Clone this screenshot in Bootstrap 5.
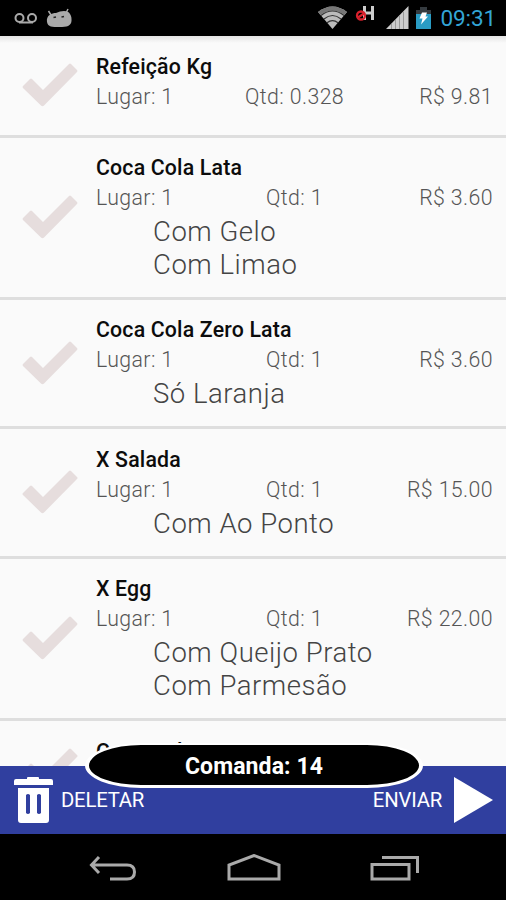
<!DOCTYPE html>
<html lang="pt-BR">
<head>
<meta charset="utf-8">
<meta name="viewport" content="width=device-width, initial-scale=1">
<title>Comanda 14</title>
<link rel="stylesheet" href="https://cdn.jsdelivr.net/npm/bootstrap@5.3.0/dist/css/bootstrap.min.css">
<style>
html,body{height:100%}
body{font-family:Roboto,"Liberation Sans",sans-serif;background:#000;font-size:21px}
.screen{width:506px;height:900px}
.status{height:36px;padding:0 10px 0 14px}
.clock{color:#33a5d6;font-size:22.5px;line-height:38px;letter-spacing:-.1px}
.orders{background:linear-gradient(#e4e4e4,#fafafa 7px);height:730px}
.order{height:129.5px;border-bottom:3px solid #dedede;padding:0 13px 0 22px}
.order.plain{height:101.5px}
.order.tall{height:162px}
.tick{width:56px;height:44px;margin-right:18px;fill:#e6dddd}
.info{padding-top:15.5px}
.name{font-weight:500;color:#0c0c0c;font-size:21.3px;line-height:30px;letter-spacing:.18px}
.meta{font-weight:300;color:#555;font-size:21.3px;line-height:30px;letter-spacing:.4px}
.meta .place{width:130px}
.meta .qty{width:135px}
.extra{font-weight:300;color:#444;font-size:27.5px;line-height:33px;letter-spacing:.53px;padding-left:57px;padding-top:2px}
.actions{height:68px;background:#303f9f;color:#fff;font-size:20.3px;letter-spacing:-.2px;padding:0 13px 0 14px}
.ticket{left:85px;top:-23px;width:338px;height:45px;background:#000;border:solid #fff;border-width:2px 4px 3px;border-radius:56px/50%;font-size:23px;line-height:44px;letter-spacing:.1px}
.keys{height:66px;padding:3px 86px 0 89px}
.keys svg{stroke:#aaa;stroke-width:3;fill:none}
</style>
<script src="https://cdn.jsdelivr.net/npm/bootstrap@5.3.0/dist/js/bootstrap.bundle.min.js"></script>
</head>
<body class="overflow-hidden">
<svg class="d-none"><symbol id="tick" viewBox="0 0 56 44"><path d="M1 23 L8 16 Q9 15 10 16 L21 27 L47 1 Q48 0 49 1 L55 7 Q56 8 55 9 L22 42.500 Q20.500 44 19 42.500 L1 25 Q0 24 1 23Z"/></symbol></svg>
<div class="screen d-flex flex-column">
  <header class="status d-flex align-items-center">
    <svg width="60" height="36" viewBox="14 0 60 36"><g fill="none" stroke="#aaa" stroke-width="2"><circle cx="19.500" cy="18" r="4"/><circle cx="32" cy="18" r="4"/><path d="M19 22.500H33"/></g>
      <g fill="#aaa"><path d="M47 22C46 15 52 13 56 13Q60 11 64 11C70 11 72 16 71.500 21C71 26 67 27 59.500 27S48 27 47 22Z"/><path d="M51 15l-2.500-4M66 13l2-4" stroke="#aaa" stroke-width="1.500"/></g><path d="M53.500 17.500l2.500-.5M61.500 17l2.500-.5" stroke="#222" stroke-width="1.500"/></svg>
    <svg class="ms-auto" width="122" height="36" viewBox="318 0 122 36">
      <path d="M318 12Q332.500 1 347 12L332.500 29Z" fill="#bbb"/><path d="M318 12Q332.500 1 347 12L344.500 15Q332.500 6 320.500 15Z" fill="#777"/><g fill="none" stroke="#333" stroke-width="1.200"><path d="M321 15.500Q332.500 6.500 344 15.500M324 19Q332.500 12 341 19M327 22.800Q332.500 18.500 338 22.800"/></g>
      <path d="M364.500 6v14M372.500 6v14M364 13h9" stroke="#ccc" stroke-width="3"/><g fill="none" stroke="#d8202c" stroke-width="2.300"><circle cx="361" cy="15.500" r="4"/><path d="M358 17.500l6-4"/></g>
      <path d="M386 29L408.500 6V29Z" fill="#ccc"/><path d="M391.500 24v5M395.500 20v9M399.500 16v13M403.500 12v17" stroke="#999"/>
      <path d="M416 10h4V7h7v3h4v4h-15z" fill="#353b40"/><path d="M416 14h15v15h-15z" fill="#2a9cc4"/><path d="M422 12.500h5l-1.500 4h2.500l-7 8 1.500-6h-3z" fill="#fff"/>
    </svg>
    <span class="clock">09:31</span>
  </header>

  <main class="orders overflow-hidden">
    <div class="order plain d-flex"><svg class="tick align-self-center flex-shrink-0"><use href="#tick"/></svg>
      <div class="info flex-grow-1"><div class="name">Refeição Kg</div><div class="meta d-flex justify-content-between"><span class="place">Lugar: 1</span><span class="qty text-center">Qtd: 0.328</span><span class="place text-end">R$ 9.81</span></div></div></div>
    <div class="order tall d-flex"><svg class="tick align-self-center flex-shrink-0"><use href="#tick"/></svg>
      <div class="info flex-grow-1"><div class="name">Coca Cola Lata</div><div class="meta d-flex justify-content-between"><span class="place">Lugar: 1</span><span class="qty text-center">Qtd: 1</span><span class="place text-end">R$ 3.60</span></div><div class="extra">Com Gelo<br>Com Limao</div></div></div>
    <div class="order d-flex"><svg class="tick align-self-center flex-shrink-0"><use href="#tick"/></svg>
      <div class="info flex-grow-1"><div class="name">Coca Cola Zero Lata</div><div class="meta d-flex justify-content-between"><span class="place">Lugar: 1</span><span class="qty text-center">Qtd: 1</span><span class="place text-end">R$ 3.60</span></div><div class="extra">Só Laranja</div></div></div>
    <div class="order d-flex"><svg class="tick align-self-center flex-shrink-0"><use href="#tick"/></svg>
      <div class="info flex-grow-1"><div class="name">X Salada</div><div class="meta d-flex justify-content-between"><span class="place">Lugar: 1</span><span class="qty text-center">Qtd: 1</span><span class="place text-end">R$ 15.00</span></div><div class="extra">Com Ao Ponto</div></div></div>
    <div class="order tall d-flex"><svg class="tick align-self-center flex-shrink-0"><use href="#tick"/></svg>
      <div class="info flex-grow-1"><div class="name">X Egg</div><div class="meta d-flex justify-content-between"><span class="place">Lugar: 1</span><span class="qty text-center">Qtd: 1</span><span class="place text-end">R$ 22.00</span></div><div class="extra">Com Queijo Prato<br>Com Parmesão</div></div></div>
    <div class="order plain d-flex"><svg class="tick align-self-center flex-shrink-0"><use href="#tick"/></svg>
      <div class="info flex-grow-1 pt-3"><div class="name">Coca Cola Zero</div></div></div>
  </main>

  <footer class="actions position-relative d-flex align-items-center">
    <svg width="39" height="48" viewBox="0 0 39 48"><path fill="#fff" fill-rule="evenodd" d="M2 3H13V2Q13 1 14 1H24Q25 1 25 2V3H37Q39 3 39 5V9H0V5Q0 3 2 3ZM4 12H35V44Q35 47 32 47H7Q4 47 4 44ZM12 19V37Q14 39 16 37V19Q14 17 12 19ZM23 19V37Q25 39 27 37V19Q25 17 23 19Z"/></svg>
    <span class="ms-2">DELETAR</span>
    <span class="ms-auto">ENVIAR</span>
    <svg class="ms-2" width="43" height="48" viewBox="-4 0 43 48"><path fill="#fff" d="M0 1L39 24 0 47Z"/></svg>
    <div class="ticket position-absolute text-center fw-bold">Comanda: 14</div>
  </footer>

  <nav class="keys d-flex justify-content-between align-items-center">
    <svg width="48" height="30" viewBox="0 0 48 30"><path d="M10 3L2.500 11 10 19M3 11H38Q45.500 11 45.500 18T38 25H21"/></svg>
    <svg width="54" height="30" viewBox="0 0 54 30"><path d="M2 25V11L27 1.500 52 11V25Z"/></svg>
    <svg width="50" height="30" viewBox="0 0 50 30"><path d="M2 10.500H39V25H2ZM12 3.500H47.500V19"/></svg>
  </nav>
</div>
</body>
</html>
